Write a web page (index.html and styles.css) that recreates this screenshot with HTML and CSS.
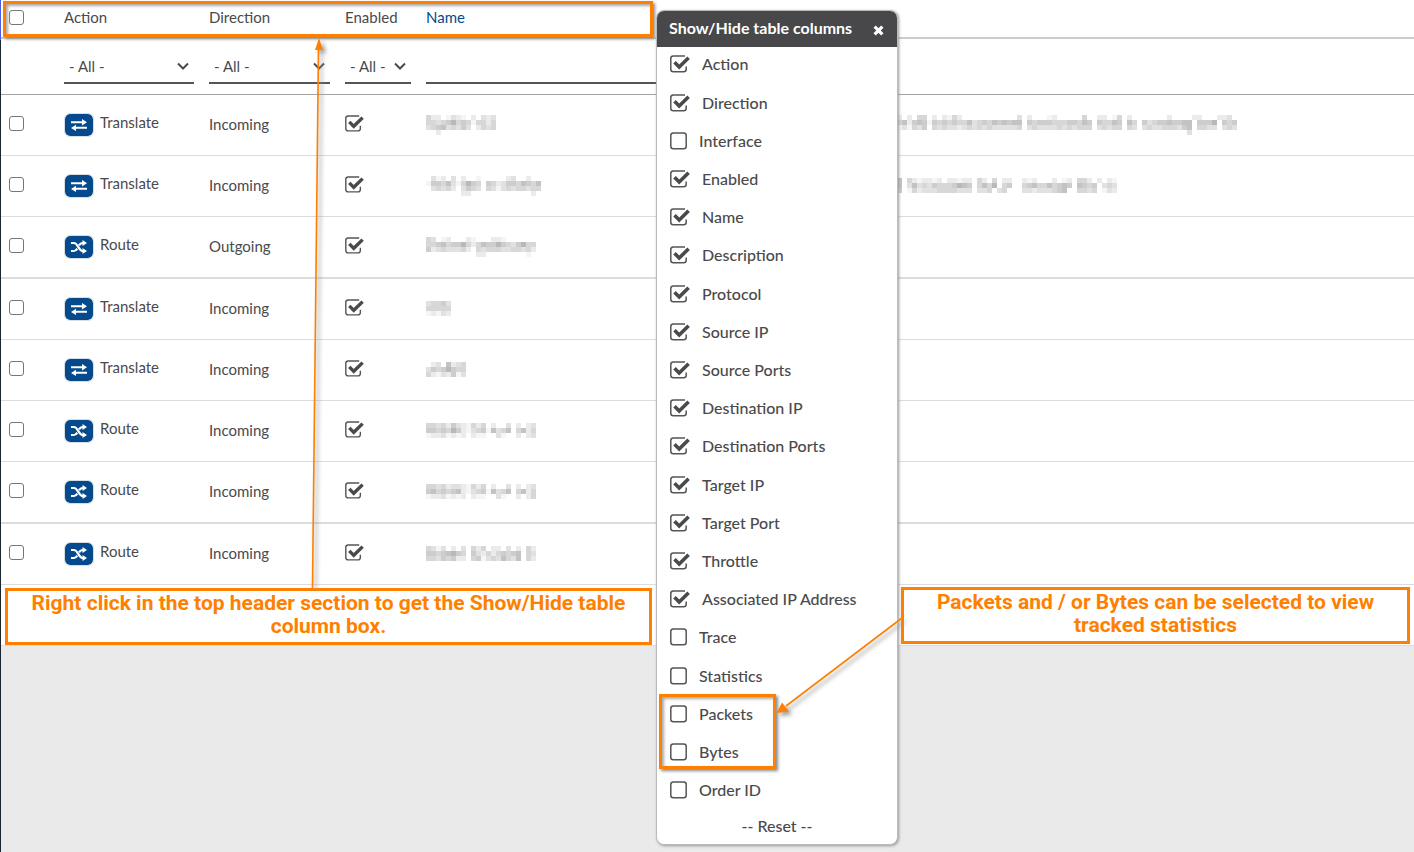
FILE: index.html
```html
<!DOCTYPE html>
<html lang="en">
<head>
<meta charset="utf-8">
<meta name="viewport" content="width=device-width, initial-scale=1">
<title>Port forwarding rules</title>
<link rel="stylesheet" href="styles.css">
</head>
<body>
<svg class="defs" aria-hidden="true">
  <symbol id="swap" viewBox="0 0 16 12">
    <path d="M0 2.2H11V0L16 3.3 11 6.4V4.2H0zM16 7.8H5V5.8L0 8.9 5 12V9.8H16z"/>
  </symbol>
  <symbol id="shuffle" viewBox="0 0 16 14">
    <path d="M0 3H3C7 3 7.500 11 12 11M0 11H3C4.500 11 5.400 10 6.200 8.600M8 5.400C8.800 4 10 3 12 3" fill="none" stroke="currentColor" stroke-width="2.200"/>
    <path d="M11.500 0L16 3 11.500 6zM11.500 8L16 11 11.500 14z"/>
  </symbol>
</svg>
<div class="page">
  <div class="rail"></div>
  <main class="content">
    <div class="panel">
      <table class="rules">
        <colgroup><col class="c-pick"><col class="c-action"><col class="c-direction"><col class="c-enabled"><col class="c-name"><col></colgroup>
        <thead>
          <tr class="head">
            <th><input class="pick" type="checkbox" aria-label="Select all"></th>
            <th>Action</th><th>Direction</th><th>Enabled</th><th class="sorted">Name</th><th></th>
          </tr>
          <tr class="filters">
            <td></td>
            <td><select class="filter" aria-label="Filter action"><option>- All -</option></select></td>
            <td><select class="filter" aria-label="Filter direction"><option>- All -</option></select></td>
            <td><select class="filter" aria-label="Filter enabled"><option>- All -</option></select></td>
            <td><input class="filter" type="text" aria-label="Filter name"></td>
            <td></td>
          </tr>
        </thead>
        <tbody id="rows"></tbody>
      </table>
    </div>
  </main>

  <div class="mark mark-header"></div>

  <section class="popup" aria-labelledby="popup-title">
    <header class="popup-head">
      <h2 id="popup-title">Show/Hide table columns</h2>
      <button class="close" type="button" aria-label="Close"><svg viewBox="0 0 10 10"><path d="M1.500 1.500L8.500 8.500M8.500 1.500L1.500 8.500"/></svg></button>
    </header>
    <ul class="columns">
      <li><label><input class="tick" type="checkbox" checked>Action</label></li>
      <li><label><input class="tick" type="checkbox" checked>Direction</label></li>
      <li><label><input class="tick" type="checkbox">Interface</label></li>
      <li><label><input class="tick" type="checkbox" checked>Enabled</label></li>
      <li><label><input class="tick" type="checkbox" checked>Name</label></li>
      <li><label><input class="tick" type="checkbox" checked>Description</label></li>
      <li><label><input class="tick" type="checkbox" checked>Protocol</label></li>
      <li><label><input class="tick" type="checkbox" checked>Source IP</label></li>
      <li><label><input class="tick" type="checkbox" checked>Source Ports</label></li>
      <li><label><input class="tick" type="checkbox" checked>Destination IP</label></li>
      <li><label><input class="tick" type="checkbox" checked>Destination Ports</label></li>
      <li><label><input class="tick" type="checkbox" checked>Target IP</label></li>
      <li><label><input class="tick" type="checkbox" checked>Target Port</label></li>
      <li><label><input class="tick" type="checkbox" checked>Throttle</label></li>
      <li><label><input class="tick" type="checkbox" checked>Associated IP Address</label></li>
      <li><label><input class="tick" type="checkbox">Trace</label></li>
      <li><label><input class="tick" type="checkbox">Statistics</label></li>
      <li><label><input class="tick" type="checkbox">Packets</label></li>
      <li><label><input class="tick" type="checkbox">Bytes</label></li>
      <li><label><input class="tick" type="checkbox">Order ID</label></li>
    </ul>
    <button class="reset" type="button">-- Reset --</button>
  </section>

  <div class="mark mark-stats"></div>
  <p class="note note-left">Right click in the top header section to get the Show/Hide table<br>column box.</p>
  <p class="note note-right">Packets and / or Bytes can be selected to view<br>tracked statistics</p>
  <svg class="arrows" width="920" height="730" viewBox="0 0 920 730" aria-hidden="true">
    <path d="M312.500 588L318.500 48M902 618L786 706" fill="none" stroke="#ff8000" stroke-width="1.600"/>
    <path d="M319 38L323 50H315zM776.500 713L782 702.500 789 711.500z" fill="#ff8000"/>
  </svg>
</div>
<script src="rows.js"></script>
</body>
</html>
```
FILE: styles.css
```css
* { box-sizing: border-box; }
body { margin: 0; background: #eaeaea; color: #4a4a4c; font: 15px/20px Lato, "Open Sans", sans-serif; }
button, select, input { font: inherit; color: inherit; margin: 0; }
.defs { position: absolute; width: 0; height: 0; }

.page { position: relative; display: flex; min-height: 100vh; overflow: hidden; }
.rail { flex: none; width: 1px; background: linear-gradient(#4a5be0 40px, #1c2430 40px); }
.content { flex: 1; min-width: 0; }
.panel { background: #fff; padding-bottom: 60px; border-bottom: 1px solid #dcdcdc; }

.rules { width: 100%; table-layout: fixed; border-collapse: separate; border-spacing: 0; }
.c-pick { width: 56px; }
.c-action { width: 145px; }
.c-direction { width: 136px; }
.c-enabled { width: 81px; }
.c-name { width: 253px; }
.rules th, .rules td { padding: 0 8px 0 7px; text-align: left; vertical-align: middle; font-weight: 400; border-bottom: 1px solid #dcdcdc; }
.rules .head th { height: 39px; padding-bottom: 3px; border-bottom: 2px solid #ccc; }
.rules .head .sorted { color: #044a8d; }
.rules .filters td { height: 56px; padding-top: 11px; padding-bottom: 10px; border-bottom-color: #a3a3a3; }
.rules tbody td { height: 61px; padding-bottom: 3px; }
.rules tbody tr:nth-child(4n+3) td { height: 62px; border-bottom-width: 2px; }
.rules tbody .act, .rules tbody .hidden-text { padding-bottom: 1px; }
.rules .desc { padding-left: 225px; }

.pick { display: block; appearance: none; width: 15px; height: 15px; margin-left: 1px; border: 1px solid #767676; border-radius: 3px; background: #fff; }
.filter { display: block; width: 100%; height: 34px; padding: 0 5px; border: 0; border-bottom: 2px solid #555; border-radius: 0; background: none; appearance: none; outline: 0; }
select.filter { background: url("data:image/svg+xml,%3Csvg xmlns='http://www.w3.org/2000/svg' width='12' height='8'%3E%3Cpath d='M1 1.500L6 6.500 11 1.500' fill='none' stroke='%234a4a4c' stroke-width='2'/%3E%3C/svg%3E") no-repeat right 5px center; }

.action { display: flex; align-items: flex-start; gap: 6px; line-height: 18px; }
.kind { display: flex; align-items: center; justify-content: center; width: 30px; height: 24px; padding: 0; border: 1px solid #d5dde5; border-radius: 6px; background: #044a8d; background-clip: padding-box; color: #fff; }
.kind svg { width: 16px; height: 14px; fill: currentColor; }
.mosaic { display: block; }

.tick { flex: none; appearance: none; width: 17px; height: 18px; background: url("data:image/svg+xml,%3Csvg xmlns='http://www.w3.org/2000/svg' viewBox='0 0 17 18'%3E%3Crect x='.8' y='1' width='15.400' height='15.800' rx='2.500' fill='none' stroke='%23555' stroke-width='1.500'/%3E%3C/svg%3E") center / 100% 100% no-repeat; }
.tick:checked { width: 20px; background-image: url("data:image/svg+xml,%3Csvg xmlns='http://www.w3.org/2000/svg' viewBox='0 0 20 18'%3E%3Cpath d='M15 1H3.300Q.8 1 .8 3.500V14.300Q.8 16.800 3.300 16.800H13.700Q16.200 16.800 16.200 14.300V11.500' fill='none' stroke='%23555' stroke-width='1.500'/%3E%3Cpath d='M4.500 7.300L9.200 12 18.600 2.800' fill='none' stroke='%234a4a4c' stroke-width='3.600'/%3E%3C/svg%3E"); }
.rules .tick:checked { display: block; width: 19px; height: 17px; }

.popup { position: absolute; left: 656px; top: 10px; width: 242px; background: #fff; border: 1px solid #bbb; border-radius: 8px; box-shadow: 1px 1px 3px #999; overflow: hidden; font-size: 16px; font-weight: 500; color: #4a4a4c; }
.popup-head { display: flex; align-items: center; justify-content: space-between; height: 36px; padding: 0 13px 2px 12px; background: #48484a; color: #fff; }
.popup-head h2 { margin: 0; font-size: 16px; font-weight: 700; }
.close { display: flex; margin-top: 4px; padding: 0; border: 0; background: none; }
.close svg { width: 11px; height: 11px; fill: none; stroke: #fff; stroke-width: 3; }
.columns { margin: 0; padding: 0 13px; list-style: none; }
.columns li { display: flex; align-items: center; height: 38px; padding-bottom: 4px; }
.columns li:nth-child(5n+2) { height: 39px; }
.columns label { display: flex; align-items: center; gap: 12px; }
.reset { display: block; width: 100%; height: 33px; padding: 0 0 4px; border: 0; background: none; font-size: 16px; }

.mark { position: absolute; border: 3px solid #ff8000; box-shadow: 2px 2px 3px #888, inset 2px 2px 3px #aaa; }
.mark-header { left: 3px; top: 1px; width: 650px; height: 36px; }
.mark-stats { left: 659px; top: 694px; width: 117px; height: 75px; }
.note { position: absolute; margin: 0; padding-top: 1px; height: 57px; border: 3px solid #ff8000; background: #fff; color: #ff8000; font: 700 21px/23px Roboto, sans-serif; text-align: center; white-space: nowrap; }
.note-left { left: 5px; top: 588px; width: 647px; }
.note-right { left: 901px; top: 587px; width: 509px; }
.arrows { position: absolute; left: 0; top: 0; pointer-events: none; filter: drop-shadow(3px 3px 2px #999); }
```
FILE: rows.js
```js
// Each redacted value is a grid of 5px blocks; a digit is how dark the block is.
const rules = [
  { kind: "Translate", dir: "Incoming",
    name: ["42201321020323", "44345745414424", "34563435302434", "00200000000000"],
    desc: ["20204402021420000000000030200012000004002201402000000020000220002230", "46256515454544634546565660545554445546505446506405345565566055570545", "13143504343323434343333340343333434344403434404303433444356044330343", "00000000000000000000000000000000000000000000000000000000003000000000"] },
  { kind: "Translate", dir: "Incoming",
    name: ["03120302001000002300200", "15546314754054235546546", "03434203543043134344344", "00000002200000000000020"],
    desc: ["60421221202212204204022002120002012044202021", "60363435444576504647045004564464565065450343", "50142333444433303340340003323334560044340132"] },
  { kind: "Route", dir: "Outgoing",
    name: ["4301200021000221000000", "4456455742465575435744", "5234333420434443344342", "0000000000220000000010"] },
  { kind: "Translate", dir: "Incoming", name: ["34453", "44444", "12132"] },
  { kind: "Translate", dir: "Incoming", name: ["02306234", "35457544", "42132513"] },
  { kind: "Route", dir: "Incoming",
    name: ["4434253214240200302023", "5545475213451634604624", "1223121202110031002023"] },
  { kind: "Route", dir: "Incoming",
    name: ["4434233214240200302023", "5645456213451634604624", "1223121202110031002024"] },
  { kind: "Route", dir: "Incoming",
    name: ["4313020304240220302042", "5545675405324245456043", "4435452204513436436042"] }
];

function mosaic(rows) {
  if (!rows) return "";
  const cols = rows[0].length;
  let rects = "";
  rows.forEach((row, y) => [...row].forEach((d, x) => {
    if (d === "0") return;
    const g = 255 - d * 10;
    rects += `<rect x="${x * 5}" y="${y * 5}" width="5" height="5" fill="rgb(${g},${g},${g})"/>`;
  }));
  return `<svg class="mosaic" role="img" aria-label="Redacted" width="${cols * 5}" height="${rows.length * 5}" shape-rendering="crispEdges">${rects}</svg>`;
}

document.getElementById("rows").innerHTML = rules.map((r) => `
  <tr>
    <td><input class="pick" type="checkbox" aria-label="Select rule"></td>
    <td class="act"><div class="action"><button class="kind" type="button" aria-label="${r.kind}"><svg><use href="#${r.kind === "Route" ? "shuffle" : "swap"}"/></svg></button><span>${r.kind}</span></div></td>
    <td>${r.dir}</td>
    <td><input class="tick" type="checkbox" checked aria-label="Enabled"></td>
    <td class="hidden-text">${mosaic(r.name)}</td>
    <td class="hidden-text desc">${mosaic(r.desc)}</td>
  </tr>`).join("");
```
